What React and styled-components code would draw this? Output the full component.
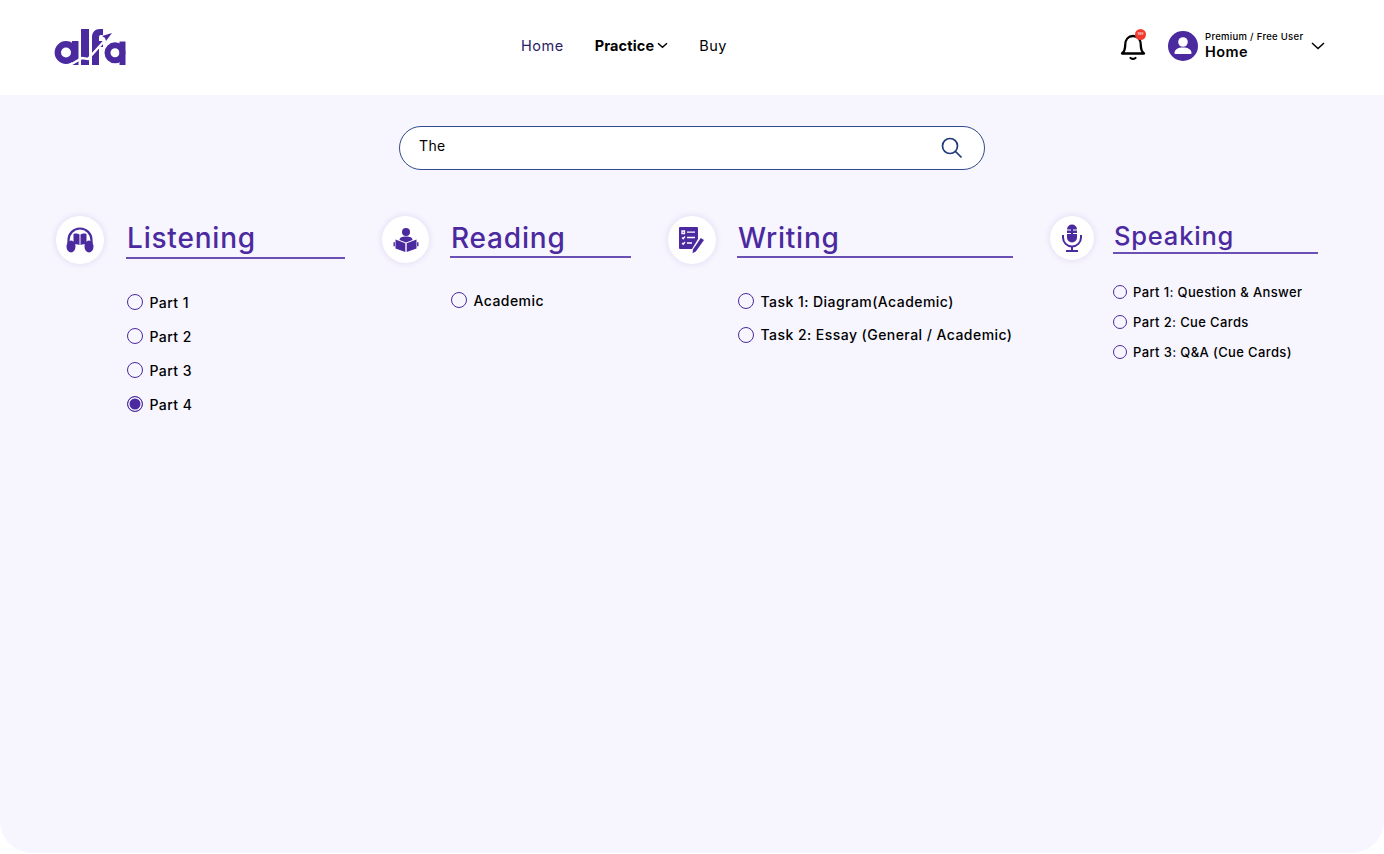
import React from "react";
import styled, { createGlobalStyle } from "styled-components";

const purple = "#4b2aa0";
const pageBg = "#f7f5fe";

const GlobalStyle = createGlobalStyle`
  html, body {
    margin: 0;
    padding: 0;
    background: #fff;
    font-family: Inter, "Liberation Sans", sans-serif;
  }
  * {
    box-sizing: border-box;
  }
`;

const sections = [
  {
    title: "Listening",
    icon: "listening",
    width: 219,
    iconSize: 48,
    iconGap: 22,
    titleHeight: 43,
    listTop: 33,
    rowGap: 14,
    items: ["Part 1", "Part 2", "Part 3", "Part 4"],
    selected: "Part 4",
  },
  {
    title: "Reading",
    icon: "reading",
    width: 181,
    iconSize: 47,
    iconGap: 21,
    titleHeight: 42,
    listTop: 32,
    rowGap: 14,
    items: ["Academic"],
  },
  {
    title: "Writing",
    icon: "writing",
    width: 276,
    iconSize: 48,
    iconGap: 21,
    titleHeight: 42,
    listTop: 33,
    rowGap: 13.5,
    items: ["Task 1: Diagram(Academic)", "Task 2: Essay (General / Academic)"],
  },
  {
    title: "Speaking",
    icon: "speaking",
    width: 205,
    iconSize: 44,
    iconGap: 19,
    titleHeight: 38,
    listTop: 28,
    rowGap: 10,
    small: true,
    items: ["Part 1: Question & Answer", "Part 2: Cue Cards", "Part 3: Q&A (Cue Cards)"],
  },
];

const Logo = () => (
  <svg width="72" height="38" viewBox="0 0 72 38" fill="none">
    <circle cx="12" cy="24.500" r="8.200" stroke={purple} strokeWidth="6.400" />
    <rect x="18" y="13" width="6.500" height="24" fill={purple} />
    <rect x="27" y="1" width="8" height="36" fill={purple} />
    <path d="M38 37V9.500C38 4 41 1 46 1h3v6h-2c-1.600 0-2 1-2 2.500V13h4v6h-4v18z" fill={purple} />
    <circle cx="61" cy="24.800" r="7.500" stroke={purple} strokeWidth="6" />
    <rect x="65.500" y="13.500" width="6" height="23.500" fill={purple} />
    <path d="M16 37l12-7 6 1 19-21" stroke="#fff" strokeWidth="2.400" />
    <path d="M58 5l-10 3 3 2 1 3z" fill={purple} />
  </svg>
);

const SectionIcon = ({ name }) => {
  if (name === "listening") {
    return (
      <svg width="28" height="26" viewBox="0 0 28 26" fill={purple}>
        <path d="M2.500 16v-3a11.500 11.500 0 0 1 23 0v3" fill="none" stroke={purple} strokeWidth="2.200" />
        <ellipse cx="5" cy="19.500" rx="4.500" ry="6" />
        <ellipse cx="23" cy="19.500" rx="4.500" ry="6" />
        <path d="M7.500 7c2-.6 4.500-.6 6 .4V18c-1.500-.8-4-.9-6-.4z" />
        <path d="M20.500 7c-2-.6-4.500-.6-6 .4V18c1.500-.8 4-.9 6-.4z" />
      </svg>
    );
  }
  if (name === "reading") {
    return (
      <svg width="26" height="26" viewBox="0 0 26 26" fill={purple}>
        <circle cx="13" cy="5" r="4" />
        <path d="M6.500 13c0-2.500 2.500-3.600 6.500-3.600s6.500 1.100 6.500 3.600L13 15.500z" />
        <path d="M2.500 12.500L12.300 16.300V25L2.500 21.500z" />
        <path d="M23.500 12.500L13.700 16.300V25L23.500 21.500z" />
        <rect x="0.500" y="15" width="1.400" height="4.500" rx="0.700" />
        <rect x="24.100" y="15" width="1.400" height="4.500" rx="0.700" />
      </svg>
    );
  }
  if (name === "writing") {
    return (
      <svg width="28" height="28" viewBox="0 0 28 28" fill={purple}>
        <path d="M1 2a1 1 0 0 1 1-1h17a1 1 0 0 1 1 1v11l-6 10H2a1 1 0 0 1-1-1z" />
        <path
          d="M4 5h2.500v2.500H4zM9 6.200h8M4 11.500l1.200 1.200L7 10.500M9 11.500h8M4 17l1.200 1.200L7 16M9 17h5"
          fill="none"
          stroke="#fff"
          strokeWidth="1.300"
        />
        <path d="M22.800 12l3.200 1.900-8.200 11.600-3.300 1.800.5-3.800z" />
      </svg>
    );
  }
  return (
    <svg width="22" height="28" viewBox="0 0 22 28" fill={purple}>
      <rect x="6" y="0.500" width="10" height="18" rx="5" />
      <path d="M6 6h4M12 6h4M6 9.500h4M12 9.500h4" stroke="#fff" strokeWidth="1.200" />
      <path d="M2 11v2.500a9 9 0 0 0 18 0V11" fill="none" stroke={purple} strokeWidth="2" />
      <path d="M11 22.500V26.500M5 27h12" fill="none" stroke={purple} strokeWidth="2" />
    </svg>
  );
};

const App = () => (
  <>
    <GlobalStyle />
    <Page>
      <Header>
        <LogoLink href="#">
          <Logo />
        </LogoLink>
        <Nav>
          <NavLink $tone="muted">Home</NavLink>
          <NavLink $active>
            Practice
            <svg width="11" height="7" viewBox="0 0 11 7" fill="none">
              <path d="M1 1.200l4.500 4 4.500-4" stroke="#000" strokeWidth="1.500" />
            </svg>
          </NavLink>
          <NavLink>Buy</NavLink>
        </Nav>
        <UserArea>
          <BellWrap>
            <svg width="26" height="32" viewBox="0 0 26 32" fill="none">
              <path
                d="M2 23.500c2.500-2 3.200-4 3.200-8.500 0-5.500 3.200-9 7.800-9s7.800 3.500 7.800 9c0 4.500.7 6.500 3.200 8.500z"
                stroke="#000"
                strokeWidth="2.300"
                strokeLinejoin="round"
              />
              <path d="M10.500 28c1.300 1 3.700 1 5 0" stroke="#000" strokeWidth="2.200" strokeLinecap="round" />
            </svg>
            <BellBadge>999</BellBadge>
          </BellWrap>
          <Avatar>
            <svg width="30" height="30" viewBox="0 0 30 30">
              <circle cx="15" cy="15" r="15" fill={purple} />
              <circle cx="15" cy="11" r="4.800" fill="#fff" />
              <path d="M6.500 22c0-3.500 3.500-5.500 8.500-5.500s8.500 2 8.500 5.500c0 .6-.4 1-1 1h-15c-.6 0-1-.4-1-1z" fill="#fff" />
            </svg>
          </Avatar>
          <UserText>
            <UserPlan>Premium / Free User</UserPlan>
            <UserName>Home</UserName>
          </UserText>
          <svg width="14" height="8" viewBox="0 0 14 8" fill="none">
            <path d="M1 1l6 5.500L13 1" stroke="#000" strokeWidth="1.500" />
          </svg>
        </UserArea>
      </Header>
      <Main>
        <SearchBar>
          <SearchInput defaultValue="The" />
          <svg width="22" height="22" viewBox="0 0 22 22" fill="none">
            <circle cx="9" cy="9" r="7.500" stroke="#1f3a78" strokeWidth="1.700" />
            <path d="M14.500 14.500l6 6" stroke="#1f3a78" strokeWidth="1.700" />
          </svg>
        </SearchBar>
        <Sections>
          {sections.map((section) => (
            <Section key={section.title} $gap={section.iconGap}>
              <IconCircle $size={section.iconSize}>
                <SectionIcon name={section.icon} />
              </IconCircle>
              <SectionBody $width={section.width}>
                <SectionTitle $height={section.titleHeight} $small={section.small}>
                  {section.title}
                </SectionTitle>
                <OptionList $top={section.listTop} $gap={section.rowGap} $small={section.small}>
                  {section.items.map((item) => (
                    <Option key={item} $small={section.small}>
                      <Radio $checked={item === section.selected} $small={section.small} />
                      {item}
                    </Option>
                  ))}
                </OptionList>
              </SectionBody>
            </Section>
          ))}
        </Sections>
      </Main>
    </Page>
  </>
);

const Page = styled.div`
  width: 1384px;
  height: 854px;
  display: flex;
  flex-direction: column;
  overflow: hidden;
`;

const Header = styled.header`
  height: 95px;
  flex: none;
  display: flex;
  align-items: center;
  padding: 0 0 4px 54px;
  background: #fff;
`;

const LogoLink = styled.a`
  display: flex;
  width: 467px;
  margin-top: 2px;
`;

const Nav = styled.nav`
  width: 599px;
  display: flex;
  align-items: center;
  gap: 31px;
`;

const NavLink = styled.span`
  display: flex;
  align-items: center;
  gap: 3px;
  font-size: 14.500px;
  letter-spacing: ${(p) => (p.$active ? 0.15 : 0.5)}px;
  font-weight: ${(p) => (p.$active ? 700 : 400)};
  color: ${(p) => (p.$tone === "muted" ? "#2b1d66" : "#000")};
`;

const UserArea = styled.div`
  display: flex;
  align-items: center;
`;

const BellWrap = styled.div`
  position: relative;
  display: flex;
  width: 26px;
  margin-right: 22px;
`;

const BellBadge = styled.span`
  position: absolute;
  top: -1px;
  right: 0;
  width: 11px;
  height: 11px;
  border-radius: 50%;
  background: #f23b2f;
  color: #fff;
  font-size: 3px;
  line-height: 11px;
  text-align: center;
`;

const Avatar = styled.div`
  display: flex;
  margin-right: 7px;
`;

const UserText = styled.div`
  width: 106px;
  display: flex;
  flex-direction: column;
  color: #000;
`;

const UserPlan = styled.span`
  font-size: 9.500px;
  font-weight: 500;
  line-height: 12px;
  letter-spacing: 0.3px;
  white-space: nowrap;
`;

const UserName = styled.span`
  font-size: 14.500px;
  font-weight: 600;
  line-height: 18px;
  letter-spacing: 0.4px;
`;

const Main = styled.main`
  flex: 1;
  margin-bottom: 1px;
  padding-top: 31px;
  background: ${pageBg};
  border-radius: 0 0 32px 32px;
`;

const SearchBar = styled.div`
  width: 586px;
  height: 43.500px;
  margin: 0 auto;
  padding: 0 21px 0 19px;
  display: flex;
  align-items: center;
  background: #fff;
  border: 1px solid #2f4c8c;
  border-radius: 22px;
`;

const SearchInput = styled.input`
  flex: 1;
  min-width: 0;
  border: 0;
  outline: 0;
  padding: 0 0 4px;
  font: 400 14px Inter, "Liberation Sans", sans-serif;
  letter-spacing: 0.4px;
  color: #000;
`;

const Sections = styled.div`
  display: flex;
  align-items: flex-start;
  gap: 37px;
  margin-top: 46.500px;
  padding-left: 56px;
`;

const Section = styled.section`
  display: flex;
  align-items: flex-start;
  gap: ${(p) => p.$gap}px;
`;

const IconCircle = styled.div`
  width: ${(p) => p.$size}px;
  height: ${(p) => p.$size}px;
  flex: none;
  display: flex;
  align-items: center;
  justify-content: center;
  background: #fff;
  border-radius: 50%;
  box-shadow: 0 0 6px rgba(75, 42, 160, 0.14);
`;

const SectionBody = styled.div`
  width: ${(p) => p.$width}px;
`;

const SectionTitle = styled.h2`
  margin: 0;
  height: ${(p) => p.$height}px;
  padding-left: 1px;
  border-bottom: 2px solid #6a50b5;
  color: ${purple};
  font-size: ${(p) => (p.$small ? 25.500 : 28)}px;
  font-weight: 500;
  letter-spacing: 0.8px;
  line-height: ${(p) => (p.$small ? 40 : 44)}px;
`;

const OptionList = styled.ul`
  list-style: none;
  margin: 0;
  padding: ${(p) => p.$top}px 0 0 ${(p) => (p.$small ? 0 : 1)}px;
  display: flex;
  flex-direction: column;
  gap: ${(p) => p.$gap}px;
`;

const Option = styled.li`
  display: flex;
  align-items: center;
  gap: ${(p) => (p.$small ? 6 : 6.5)}px;
  height: 20px;
  color: #000;
  font-size: ${(p) => (p.$small ? 13 : 14)}px;
  font-weight: 500;
  letter-spacing: ${(p) => (p.$small ? 0.37 : 0.45)}px;
  white-space: nowrap;
`;

const Radio = styled.span`
  width: ${(p) => (p.$small ? 14 : 16)}px;
  height: ${(p) => (p.$small ? 14 : 16)}px;
  flex: none;
  border: 1px solid ${purple};
  border-radius: 50%;
  background: ${(p) => (p.$checked ? purple : "transparent")};
  box-shadow: ${(p) => (p.$checked ? `inset 0 0 0 1.500px ${pageBg}` : "none")};
`;

export default App;
